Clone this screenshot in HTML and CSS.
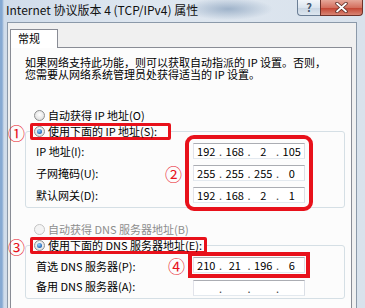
FILE: index.html
```html
<!DOCTYPE html>
<html lang="zh-CN">
<head>
  <meta charset="UTF-8">
  <title>Internet 协议版本 4 (TCP/IPv4) 属性</title>
  <link rel="stylesheet" href="styles.css">
</head>
<body>
<div class="window">
  <div class="titlebar">
    <span class="title">Internet 协议版本 4 (TCP/IPv4) 属性</span>
    <div class="caption">
      <span class="btn-help">?</span>
      <span class="btn-close">
        <svg width="13" height="11" viewBox="0 0 13 11">
          <path d="M2 1.5 L11 9.5 M11 1.5 L2 9.5" stroke="#5a2a24" stroke-width="3.4" stroke-linecap="round"/>
          <path d="M2 1.5 L11 9.5 M11 1.5 L2 9.5" stroke="#fff" stroke-width="1.8" stroke-linecap="round"/>
        </svg>
      </span>
    </div>
  </div>

  <div class="frame">
    <div class="client">
      <div class="tabs"><span class="tab">常规</span></div>

      <div class="page">
        <div class="intro">
          <div>如果网络支持此功能，则可以获取自动指派的 IP 设置。否则，</div>
          <div>您需要从网络系统管理员处获得适当的 IP 设置。</div>
        </div>

        <div class="radio radio-first"><span class="dot"></span>自动获得 IP 地址(O)</div>

        <!-- 静态 IP -->
        <fieldset class="group">
          <legend class="mark mark-ip">
            <span class="num num-legend">①</span>
            <span class="radio"><span class="dot on"></span>使用下面的 IP 地址(S):</span>
          </legend>
          <div class="fields">
            <div class="labels">
              <div>IP 地址(I):</div>
              <div>子网掩码(U):</div>
              <div>默认网关(D):</div>
            </div>
            <div class="inputs inputs-marked">
              <span class="num num-ip">②</span>
              <div class="ip"><span>192</span><i>.</i><span>168</span><i>.</i><span>2</span><i>.</i><span>105</span></div>
              <div class="ip"><span>255</span><i>.</i><span>255</span><i>.</i><span>255</span><i>.</i><span>0</span></div>
              <div class="ip"><span>192</span><i>.</i><span>168</span><i>.</i><span>2</span><i>.</i><span>1</span></div>
            </div>
          </div>
        </fieldset>

        <div class="radio radio-off"><span class="dot"></span>自动获得 DNS 服务器地址(B)</div>

        <!-- DNS -->
        <fieldset class="group">
          <legend class="mark mark-dns">
            <span class="num num-legend">③</span>
            <span class="radio"><span class="dot on"></span>使用下面的 DNS 服务器地址(E):</span>
          </legend>
          <div class="fields fields-dns">
            <div class="labels">
              <div>首选 DNS 服务器(P):</div>
              <div>备用 DNS 服务器(A):</div>
            </div>
            <div class="inputs">
              <div class="ip ip-marked">
                <span class="num num-dns">④</span>
                <span>210</span><i>.</i><span>21</span><i>.</i><span>196</span><i>.</i><span>6</span>
              </div>
              <div class="ip"><span></span><i>.</i><span></span><i>.</i><span></span><i>.</i><span></span></div>
            </div>
          </div>
        </fieldset>
      </div>
    </div>
  </div>
</div>
</body>
</html>
```

FILE: styles.css
```css
* {
  box-sizing: border-box;
}

body {
  margin: 0;
  font-family: "Noto Sans CJK SC", sans-serif;
  font-size: 11px;
  color: #000;
  overflow: hidden;
}

.window {
  width: 365px;
  height: 308px;
  display: flex;
  flex-direction: column;
  overflow: hidden;
  background:
    radial-gradient(ellipse 45px 11px at 228px 9px, #9fb3ca, rgba(159,179,202,0)),
    linear-gradient(90deg, #86a9d2 0, #86a9d2 2px, #d0dcea 4px, #dfe7f0 40%, #d9e2ec 100%);
}

/* barre de titre */
.titlebar {
  height: 22px;
  display: flex;
  justify-content: space-between;
  align-items: flex-start;
  flex: none;
}

.title {
  padding: 3px 0 0 6px;
  font-size: 12px;
  line-height: 14px;
  color: #111;
}

.caption {
  display: flex;
  margin-right: 2px;
}

.btn-help {
  width: 23px;
  height: 16px;
  border: 1px solid #6c7f96;
  border-top: none;
  border-right: none;
  border-radius: 0 0 0 4px;
  background: linear-gradient(#f2f6fa, #dbe4ee 50%, #c8d5e3 51%, #dde6ef);
  text-align: center;
  font-size: 11px;
  line-height: 14px;
  font-weight: bold;
  color: #44576e;
}

.btn-close {
  width: 43px;
  height: 16px;
  border: 1px solid #6e3129;
  border-top: none;
  border-radius: 0 0 4px 0;
  background: linear-gradient(#e6a799, #d4705f 50%, #c2412e 51%, #d88574);
  display: flex;
  align-items: center;
  justify-content: center;
}

.frame {
  flex: 1;
  display: flex;
  padding: 0 8px 0 7px;
}

.client {
  flex: 1;
  background: #f0f0f0;
  border: 1px solid #8b99a9;
  border-bottom: none;
  padding: 6px 4px 0 2px;
}

/* onglet */
.tabs {
  display: flex;
}

.tab {
  width: 48px;
  height: 19px;
  padding-left: 7px;
  border: 1px solid #898c95;
  border-bottom: none;
  background: #fff;
  line-height: 17px;
  margin-bottom: -1px;
  position: relative;
  z-index: 1;
}

.page {
  height: 300px;
  background: #fcfcfc;
  border: 1px solid #898c95;
  padding: 8px 6px 0 14px;
}

.intro {
  white-space: nowrap;
}

.intro div {
  height: 12px;
  line-height: 12px;
}

/* boutons radio */
.radio {
  display: flex;
  align-items: center;
  height: 16px;
  line-height: 16px;
  white-space: nowrap;
}

.radio-first {
  margin: 27px 0 0 9px;
}

.radio-off {
  margin: 13px 0 0 9px;
  color: #8d8d8d;
}

.dot {
  flex: none;
  position: relative;
  width: 11px;
  height: 11px;
  margin-right: 3px;
  border: 1px solid #8e8f8f;
  border-radius: 50%;
  background: radial-gradient(circle at 50% 40%, #fff, #d6d6d6);
}

.radio-off .dot {
  border-color: #c4c4c4;
  background: #f4f4f4;
}

.dot.on::after {
  content: "";
  position: absolute;
  left: 2px;
  top: 2px;
  width: 5px;
  height: 5px;
  border-radius: 50%;
  background: radial-gradient(circle at 40% 35%, #9ad6ff, #1a5fb4 75%);
}

/* groupes */
.group {
  margin: 0;
  padding: 0;
  min-width: 0;
  border: 1px solid #d5dfe5;
  border-radius: 3px;
}

.group legend {
  margin-left: 4px;
  padding: 0 2px 0 1px;
  height: 17px;
}

.group legend .radio {
  height: 11px;
  line-height: 11px;
}

.mark {
  position: relative;
  border: 3px solid #e8111b;
  border-radius: 2px;
}

.mark-ip {
  width: 141px;
}

.mark-dns {
  width: 177px;
}

.num {
  position: absolute;
  color: #e8111b;
  font-size: 17px;
  line-height: 17px;
  font-weight: normal;
}

.num-legend {
  left: -25px;
  top: -2px;
}

.num-ip {
  left: -28px;
  top: 22px;
}

.num-dns {
  left: -26px;
  top: -1px;
}

.fields {
  display: flex;
  padding: 0 0 1px 10px;
}

.labels {
  width: 157px;
  line-height: 22px;
}

.inputs {
  position: relative;
  width: 112px;
  margin-top: 3px;
  display: flex;
  flex-direction: column;
  gap: 6px;
  align-self: flex-start;
}

.inputs-marked {
  outline: 4px solid #e8111b;
  outline-offset: 4px;
  border-radius: 1px;
}

.fields-dns {
  padding-bottom: 2px;
}

.fields-dns .labels {
  padding-top: 2px;
  line-height: 20px;
}

.fields-dns .inputs {
  gap: 7px;
}

/* champs adresse IP */
.ip {
  position: relative;
  height: 16px;
  display: grid;
  grid-template-columns: 1fr 4px 1fr 4px 1fr 4px 1fr;
  align-items: center;
  border: 1px solid;
  border-color: #abadb3 #dbdfe6 #e3e9ef #e2e3ea;
  background: #fff;
  text-align: center;
  line-height: 14px;
}

.ip i {
  font-style: normal;
  color: #444;
}

.ip-marked {
  outline: 4px solid #e8111b;
  outline-offset: 1px;
}
```
